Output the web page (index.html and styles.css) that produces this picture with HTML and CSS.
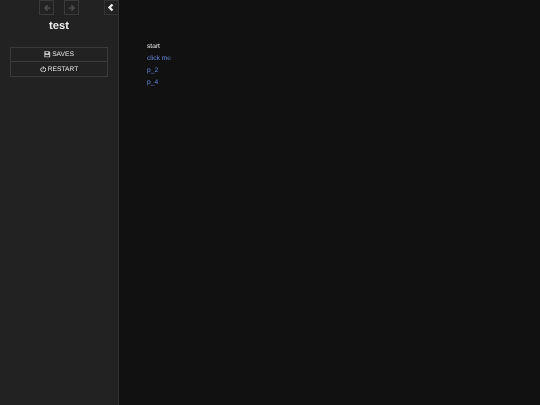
FILE: index.html
```html
<!DOCTYPE html>
<html lang="en">
<head>
    <meta charset="UTF-8">
    <meta name="viewport" content="width=device-width, initial-scale=1.0">
    <title>test</title>
    <link rel="stylesheet" href="styles.css">
</head>
<body>
    <div class="sidebar">
        <div class="history">
            <button class="nav-btn" type="button">
                <svg class="nav-icon" viewBox="0 0 10 10"><path d="M5.2 .8 1 5l4.2 4.2 1.4-1.4-1.8-1.8H9.2V4H4.8l1.8-1.8z"/></svg>
            </button>
            <button class="nav-btn" type="button">
                <svg class="nav-icon" viewBox="0 0 10 10"><path d="M4.8 .8 9 5 4.8 9.2 3.4 7.8 5.2 6H.8V4h4.4L3.4 2.2z"/></svg>
            </button>
            <button class="toggle-btn" type="button">
                <svg class="toggle-icon" viewBox="0 0 8 10"><path d="M5.4.6 7.2 2.4 4.6 5l2.6 2.6-1.8 1.8L1 5z"/></svg>
            </button>
        </div>
        <h1 class="story-title">test</h1>
        <div class="menu">
            <a href="#" class="menu-item">
                <svg class="menu-icon" viewBox="0 0 10 10"><path fill-rule="evenodd" d="M.5.5h7.5l1.5 1.5v7.500H.5zM2.500 1.500v2.500h4v-2.500zM2 6v2.500h6V6z"/></svg>
                <span class="menu-label">SAVES</span>
            </a>
            <a href="#" class="menu-item menu-item-tall">
                <svg class="menu-icon" viewBox="0 0 10 10"><path class="power-arc" d="M3 2.200a3.800 3.800 0 1 0 4 0"/><path class="power-arc" d="M5 .5v4.500"/></svg>
                <span class="menu-label">RESTART</span>
            </a>
        </div>
    </div>

    <div class="passage">
        <p class="line">start</p>
        <p class="line"><a href="#">click me</a></p>
        <p class="line"><a href="#">p_2</a></p>
        <p class="line"><a href="#">p_4</a></p>
    </div>
</body>
</html>
```

FILE: styles.css
```css
html, body {
    height: 100%;
}
body {
    font-family: "Liberation Sans", Arial, sans-serif;
    font-size: 6.67px;
    text-rendering: geometricPrecision;
    background: #111;
    color: #eee;
    margin: 0;
    display: flex;
    overflow: hidden;
}
.sidebar {
    width: 118px;
    flex-shrink: 0;
    background: #222;
    border-right: 1px solid #2e2e2e;
}
.history {
    display: flex;
    gap: 10px;
    padding-left: 39px;
    height: 15px;
}
.nav-btn,
.toggle-btn {
    width: 15px;
    height: 15px;
    padding: 0;
    background: transparent;
    border: 1px solid #3a3a3a;
    display: flex;
    justify-content: center;
    align-items: center;
}
.toggle-btn {
    margin-left: auto;
    margin-right: -1px;
    padding-right: 2px;
    background: #222;
    border-color: #333;
}
.nav-icon {
    width: 8px;
    height: 8px;
    fill: #4c4c4c;
}
.toggle-icon {
    width: 7px;
    height: 9px;
    fill: #eee;
}
.story-title {
    margin: 4px 0 0;
    height: 28px;
    font-size: 11.2px;
    line-height: 14px;
    font-weight: bold;
    text-align: center;
    filter: blur(0.3px);
}
.menu {
    margin: 0 10px;
    border: 1px solid #3a3a3a;
}
.menu-item {
    height: 13px;
    display: flex;
    justify-content: center;
    align-items: center;
    gap: 1.5px;
    color: #e6e6e6;
    text-decoration: none;
}
.menu-item-tall {
    height: 14px;
    border-top: 1px solid #3a3a3a;
}
.menu-label {
    filter: blur(0.3px);
}
.menu-icon {
    width: 6.5px;
    height: 6.5px;
    fill: #ccc;
    filter: blur(0.3px);
}
.power-arc {
    fill: none;
    stroke: #ddd;
    stroke-width: 1.500;
}
.passage {
    padding: 40.5px 0 0 28px;
}
.line {
    margin: 0;
    height: 12px;
    line-height: 12px;
    filter: blur(0.3px);
}
.line a {
    color: #68d;
    text-decoration: none;
}
```
